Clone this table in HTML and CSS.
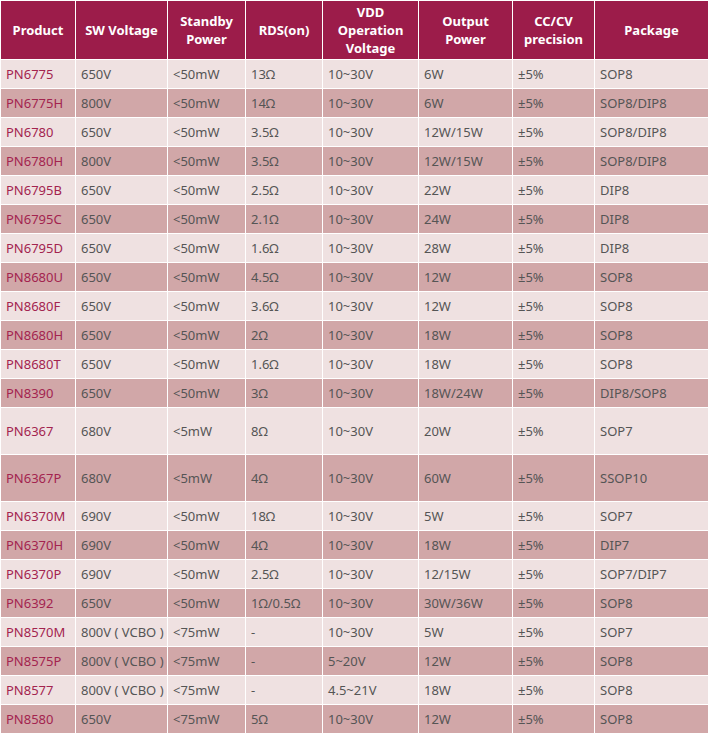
FILE: index.html
```html
<!DOCTYPE html>
<html>
<head>
<meta charset="utf-8">
<link rel="stylesheet" href="styles.css">
</head>
<body>
<table class="spec">
<colgroup>
<col class="c1"><col class="c2"><col class="c3"><col class="c4"><col class="c5"><col class="c6"><col class="c7"><col class="c8">
</colgroup>
<thead>
<tr><th>Product</th><th>SW Voltage</th><th>Standby<br>Power</th><th>RDS(on)</th><th>VDD<br>Operation<br>Voltage</th><th>Output<br>Power</th><th>CC/CV<br>precision</th><th>Package</th></tr>
</thead>
<tbody>
<tr class="lt"><td class="p">PN6775</td><td>650V</td><td>&lt;50mW</td><td>13Ω</td><td>10~30V</td><td>6W</td><td>±5%</td><td>SOP8</td></tr>
<tr class="dk"><td class="p">PN6775H</td><td>800V</td><td>&lt;50mW</td><td>14Ω</td><td>10~30V</td><td>6W</td><td>±5%</td><td>SOP8/DIP8</td></tr>
<tr class="lt"><td class="p">PN6780</td><td>650V</td><td>&lt;50mW</td><td>3.5Ω</td><td>10~30V</td><td>12W/15W</td><td>±5%</td><td>SOP8/DIP8</td></tr>
<tr class="dk"><td class="p">PN6780H</td><td>800V</td><td>&lt;50mW</td><td>3.5Ω</td><td>10~30V</td><td>12W/15W</td><td>±5%</td><td>SOP8/DIP8</td></tr>
<tr class="lt"><td class="p">PN6795B</td><td>650V</td><td>&lt;50mW</td><td>2.5Ω</td><td>10~30V</td><td>22W</td><td>±5%</td><td>DIP8</td></tr>
<tr class="dk"><td class="p">PN6795C</td><td>650V</td><td>&lt;50mW</td><td>2.1Ω</td><td>10~30V</td><td>24W</td><td>±5%</td><td>DIP8</td></tr>
<tr class="lt"><td class="p">PN6795D</td><td>650V</td><td>&lt;50mW</td><td>1.6Ω</td><td>10~30V</td><td>28W</td><td>±5%</td><td>DIP8</td></tr>
<tr class="dk"><td class="p">PN8680U</td><td>650V</td><td>&lt;50mW</td><td>4.5Ω</td><td>10~30V</td><td>12W</td><td>±5%</td><td>SOP8</td></tr>
<tr class="lt"><td class="p">PN8680F</td><td>650V</td><td>&lt;50mW</td><td>3.6Ω</td><td>10~30V</td><td>12W</td><td>±5%</td><td>SOP8</td></tr>
<tr class="dk"><td class="p">PN8680H</td><td>650V</td><td>&lt;50mW</td><td>2Ω</td><td>10~30V</td><td>18W</td><td>±5%</td><td>SOP8</td></tr>
<tr class="lt"><td class="p">PN8680T</td><td>650V</td><td>&lt;50mW</td><td>1.6Ω</td><td>10~30V</td><td>18W</td><td>±5%</td><td>SOP8</td></tr>
<tr class="dk"><td class="p">PN8390</td><td>650V</td><td>&lt;50mW</td><td>3Ω</td><td>10~30V</td><td>18W/24W</td><td>±5%</td><td>DIP8/SOP8</td></tr>
<tr class="lt tall"><td class="p">PN6367</td><td>680V</td><td>&lt;5mW</td><td>8Ω</td><td>10~30V</td><td>20W</td><td>±5%</td><td>SOP7</td></tr>
<tr class="dk tall"><td class="p">PN6367P</td><td>680V</td><td>&lt;5mW</td><td>4Ω</td><td>10~30V</td><td>60W</td><td>±5%</td><td>SSOP10</td></tr>
<tr class="lt"><td class="p">PN6370M</td><td>690V</td><td>&lt;50mW</td><td>18Ω</td><td>10~30V</td><td>5W</td><td>±5%</td><td>SOP7</td></tr>
<tr class="dk"><td class="p">PN6370H</td><td>690V</td><td>&lt;50mW</td><td>4Ω</td><td>10~30V</td><td>18W</td><td>±5%</td><td>DIP7</td></tr>
<tr class="lt"><td class="p">PN6370P</td><td>690V</td><td>&lt;50mW</td><td>2.5Ω</td><td>10~30V</td><td>12/15W</td><td>±5%</td><td>SOP7/DIP7</td></tr>
<tr class="dk"><td class="p">PN6392</td><td>650V</td><td>&lt;50mW</td><td>1Ω/0.5Ω</td><td>10~30V</td><td>30W/36W</td><td>±5%</td><td>SOP8</td></tr>
<tr class="lt"><td class="p">PN8570M</td><td>800V ( VCBO )</td><td>&lt;75mW</td><td>-</td><td>10~30V</td><td>5W</td><td>±5%</td><td>SOP7</td></tr>
<tr class="dk"><td class="p">PN8575P</td><td>800V ( VCBO )</td><td>&lt;75mW</td><td>-</td><td>5~20V</td><td>12W</td><td>±5%</td><td>SOP8</td></tr>
<tr class="lt"><td class="p">PN8577</td><td>800V ( VCBO )</td><td>&lt;75mW</td><td>-</td><td>4.5~21V</td><td>18W</td><td>±5%</td><td>SOP8</td></tr>
<tr class="dk"><td class="p">PN8580</td><td>650V</td><td>&lt;75mW</td><td>5Ω</td><td>10~30V</td><td>12W</td><td>±5%</td><td>SOP8</td></tr>
</tbody>
</table>
</body>
</html>
```
FILE: styles.css
```css
html, body {
  margin: 0;
  padding: 0;
  background: #ffffff;
}
.spec {
  table-layout: fixed;
  border-collapse: separate;
  border-spacing: 1px;
  width: 709px;
  font-family: "Noto Sans", "Noto Sans CJK SC", sans-serif;
  font-size: 13px;
  color: #555555;
}
.c1 { width: 74px; }
.c2 { width: 91px; }
.c3 { width: 77px; }
.c4 { width: 76px; }
.c5 { width: 95px; }
.c6 { width: 93px; }
.c7 { width: 81px; }
.c8 { width: 113px; }
.spec th {
  background: #9c1c4a;
  color: #ffffff;
  font-weight: bold;
  text-align: center;
  vertical-align: middle;
  height: 58px;
  padding: 0 2px;
  line-height: 18px;
}
.spec td {
  height: 28px;
  padding: 0 0 0 5px;
  vertical-align: middle;
  text-align: left;
  white-space: nowrap;
  line-height: 18px;
}
.spec tr.tall td {
  height: 46px;
}
.lt td { background: #efe1e1; }
.dk td { background: #d1a7a8; }
.spec td.p { color: #a3244f; }
```
